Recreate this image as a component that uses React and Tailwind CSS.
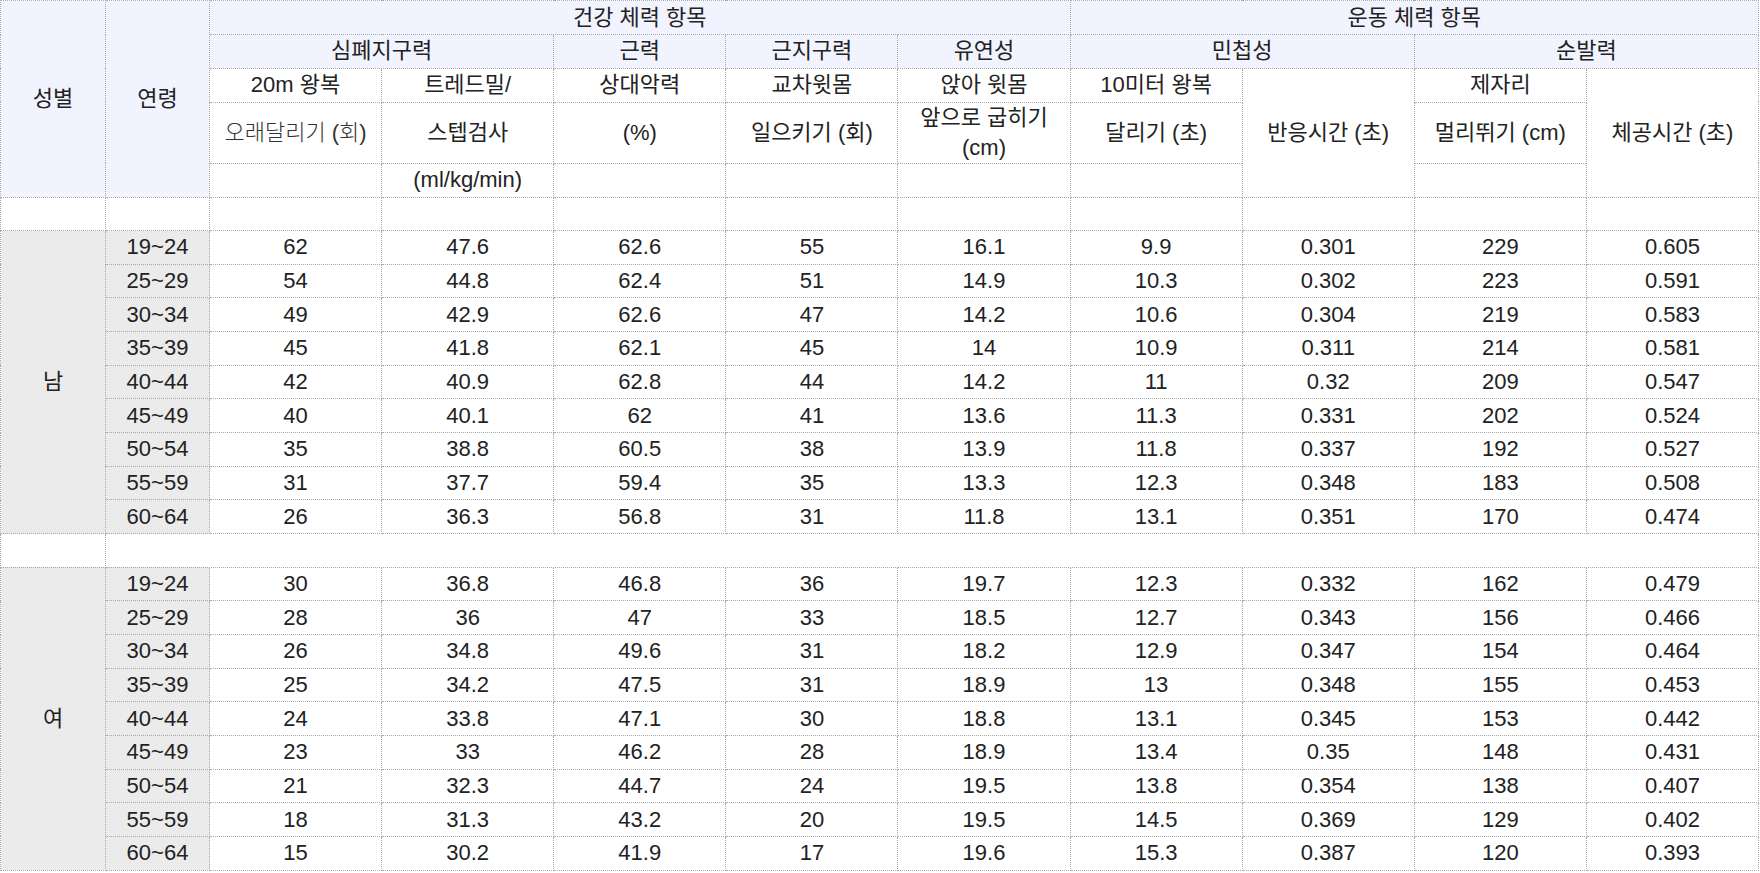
import React from "react";

const male = [
  ["19~24", "62", "47.6", "62.6", "55", "16.1", "9.9", "0.301", "229", "0.605"],
  ["25~29", "54", "44.8", "62.4", "51", "14.9", "10.3", "0.302", "223", "0.591"],
  ["30~34", "49", "42.9", "62.6", "47", "14.2", "10.6", "0.304", "219", "0.583"],
  ["35~39", "45", "41.8", "62.1", "45", "14", "10.9", "0.311", "214", "0.581"],
  ["40~44", "42", "40.9", "62.8", "44", "14.2", "11", "0.32", "209", "0.547"],
  ["45~49", "40", "40.1", "62", "41", "13.6", "11.3", "0.331", "202", "0.524"],
  ["50~54", "35", "38.8", "60.5", "38", "13.9", "11.8", "0.337", "192", "0.527"],
  ["55~59", "31", "37.7", "59.4", "35", "13.3", "12.3", "0.348", "183", "0.508"],
  ["60~64", "26", "36.3", "56.8", "31", "11.8", "13.1", "0.351", "170", "0.474"],
];
const female = [
  ["19~24", "30", "36.8", "46.8", "36", "19.7", "12.3", "0.332", "162", "0.479"],
  ["25~29", "28", "36", "47", "33", "18.5", "12.7", "0.343", "156", "0.466"],
  ["30~34", "26", "34.8", "49.6", "31", "18.2", "12.9", "0.347", "154", "0.464"],
  ["35~39", "25", "34.2", "47.5", "31", "18.9", "13", "0.348", "155", "0.453"],
  ["40~44", "24", "33.8", "47.1", "30", "18.8", "13.1", "0.345", "153", "0.442"],
  ["45~49", "23", "33", "46.2", "28", "18.9", "13.4", "0.35", "148", "0.431"],
  ["50~54", "21", "32.3", "44.7", "24", "19.5", "13.8", "0.354", "138", "0.407"],
  ["55~59", "18", "31.3", "43.2", "20", "19.5", "14.5", "0.369", "129", "0.402"],
  ["60~64", "15", "30.2", "41.9", "17", "19.6", "15.3", "0.387", "120", "0.393"],
];

const cell = "border border-dotted border-[#a9a9a9] p-0 text-center align-middle";
const hd = cell + " bg-[#f1f4fe]";
const gr = cell + " bg-[#ebebeb]";

function Group({ label, rows }) {
  return rows.map((r, i) => (
    <tr key={i} className="h-[33.67px]">
      {i === 0 && (
        <td rowSpan={9} className={gr}>
          {label}
        </td>
      )}
      <td className={gr}>{r[0]}</td>
      {r.slice(1).map((v, j) => (
        <td key={j} className={cell}>
          {v}
        </td>
      ))}
    </tr>
  ));
}

export default function App() {
  return (
    <div
      className="bg-white text-[#222222] text-[22px] leading-[30px] w-[1760px] h-[873px] overflow-hidden"
      style={{ fontFamily: '"Liberation Sans", "Noto Sans CJK KR", sans-serif' }}
    >
      <table className="border-collapse table-fixed w-[1759px]">
        <colgroup>
          <col className="w-[105px]" />
          <col className="w-[104px]" />
          <col />
          <col />
          <col />
          <col />
          <col />
          <col />
          <col />
          <col />
          <col />
        </colgroup>
        <tbody>
          <tr className="h-[34px]">
            <td rowSpan={5} className={hd}>성별</td>
            <td rowSpan={5} className={hd}>연령</td>
            <td colSpan={5} className={hd}>건강 체력 항목</td>
            <td colSpan={4} className={hd}>운동 체력 항목</td>
          </tr>
          <tr className="h-[33.5px]">
            <td colSpan={2} className={hd}>심폐지구력</td>
            <td className={hd}>근력</td>
            <td className={hd}>근지구력</td>
            <td className={hd}>유연성</td>
            <td colSpan={2} className={hd}>민첩성</td>
            <td colSpan={2} className={hd}>순발력</td>
          </tr>
          <tr className="h-[34px]">
            <td className={cell}>20m 왕복</td>
            <td className={cell}>트레드밀/</td>
            <td className={cell}>상대악력</td>
            <td className={cell}>교차윗몸</td>
            <td className={cell}>앉아 윗몸</td>
            <td className={cell}>10미터 왕복</td>
            <td rowSpan={3} className={cell}>반응시간 (초)</td>
            <td className={cell}>제자리</td>
            <td rowSpan={3} className={cell}>체공시간 (초)</td>
          </tr>
          <tr className="h-[61px]">
            <td className={cell + " font-light text-[#333333]"}>오래달리기 (회)</td>
            <td className={cell}>스텝검사</td>
            <td className={cell}>(%)</td>
            <td className={cell}>일으키기 (회)</td>
            <td className={cell}>앞으로 굽히기 (cm)</td>
            <td className={cell}>달리기 (초)</td>
            <td className={cell}>멀리뛰기 (cm)</td>
          </tr>
          <tr className="h-[34px]">
            <td className={cell}></td>
            <td className={cell}>(ml/kg/min)</td>
            <td className={cell}></td>
            <td className={cell}></td>
            <td className={cell}></td>
            <td className={cell}></td>
            <td className={cell}></td>
          </tr>
          <tr className="h-[33.67px]">
            {Array.from({ length: 11 }).map((_, i) => (
              <td key={i} className={cell}></td>
            ))}
          </tr>
          <Group label="남" rows={male} />
          <tr className="h-[33.67px]">
            <td className={cell}></td>
            <td colSpan={10} className={cell}></td>
          </tr>
          <Group label="여" rows={female} />
        </tbody>
      </table>
    </div>
  );
}
